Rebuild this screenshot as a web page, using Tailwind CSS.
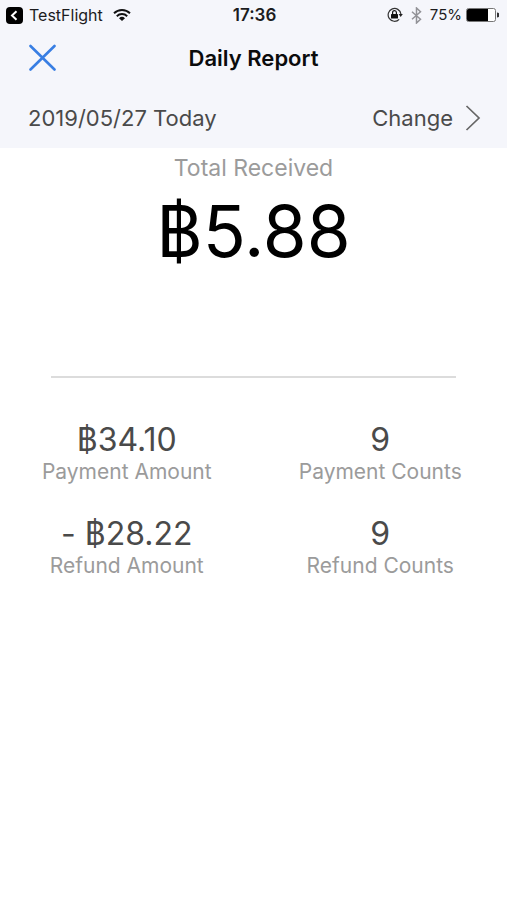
<!DOCTYPE html>
<html lang="en">
<head>
<meta charset="utf-8">
<meta name="viewport" content="width=device-width, initial-scale=1">
<title>Daily Report</title>
<script src="https://cdn.jsdelivr.net/npm/@tailwindcss/browser@4"></script>
</head>
<body class="min-h-screen bg-white font-['Inter','Liberation_Sans',sans-serif] text-[#4a4a4a]">
<header class="bg-[#f5f6fb]">
  <div class="grid h-[30px] grid-cols-[1fr_auto_1fr] items-center pl-1.5 pr-2 text-[16px] leading-5 text-[#1c1c1e]">
    <div class="flex items-center">
      <svg class="h-[17px] w-[17px]" viewBox="0 0 17 17" aria-hidden="true"><rect width="17" height="17" rx="4" fill="#000"/><path d="M10.5 4.2 6 8.5l4.5 4.3" fill="none" stroke="#fff" stroke-width="2"/></svg>
      <span class="ml-1.5">TestFlight</span>
      <svg class="ml-2.5 h-3 w-[18px]" viewBox="0 0 18 12" aria-hidden="true"><g fill="none" stroke="#111" stroke-width="1.9"><path d="M1 4.3a11.4 11.4 0 0 1 16 0"/><path d="M3.8 7.2a7.4 7.4 0 0 1 10.4 0"/></g><path d="M9 12 6 9.2a4.3 4.3 0 0 1 6 0z" fill="#111"/></svg>
    </div>
    <span class="pl-1 text-[17px] font-semibold">17:36</span>
    <div class="flex items-center justify-end">
      <svg class="h-4 w-4" viewBox="0 0 16 16" aria-hidden="true"><path d="M12.2 12.3A6.4 6.4 0 1 1 13.9 7" fill="none" stroke="#333" stroke-width="1.2"/><path d="M11.6 7h4.2l-2.1 3z" fill="#222"/><rect x="4" y="7" width="7" height="4.6" rx=".6" fill="#111"/><path d="M5.6 7.2V5.6a1.900 1.900 0 0 1 3.800 0v1.6" fill="none" stroke="#111" stroke-width="1.2"/></svg>
      <svg class="ml-2 h-[17px] w-[11px]" viewBox="0 0 11 17" aria-hidden="true"><path d="m1 4.8 8.5 7.4-4 3.8V1l4 3.8L1 12.2" fill="none" stroke="#929297" stroke-width="1.5"/></svg>
      <span class="ml-2 text-[15px]">75%</span>
      <svg class="ml-1 h-[14px] w-[33px]" viewBox="0 0 33 14" aria-hidden="true"><rect x=".5" y=".5" width="29" height="13" rx="2" fill="#fff" stroke="#777"/><path d="M2.5 1H22v12H2.5A1.5 1.5 0 0 1 1 11.500V2.500A1.500 1.500 0 0 1 2.500 1z" fill="#000"/><path d="M31 4.500a2.500 2.500 0 0 1 0 5z" fill="#333"/></svg>
    </div>
  </div>
  <div class="grid h-14 grid-cols-[1fr_auto_1fr] items-center px-7">
    <button type="button" aria-label="Close" class="h-7 w-7">
      <svg class="h-7 w-7" viewBox="0 0 28 28" aria-hidden="true"><path d="m2.500 2 24 23.500m0-23.500-24 23.500" fill="none" stroke="#387ee3" stroke-width="2.600" stroke-linecap="round"/></svg>
    </button>
    <h1 class="text-[22px] font-semibold leading-7 text-[#0b0b0c]">Daily Report</h1>
  </div>
  <div class="flex h-[62px] items-center justify-between pl-7 pr-[26px] pt-0.5 text-[22px] leading-7">
    <span>2019/05/27 Today</span>
    <button type="button" class="flex items-center">Change
      <svg class="ml-3 h-[26px] w-4" viewBox="0 0 16 26" aria-hidden="true"><path d="m1.500 1 12.500 12L1.500 25" fill="none" stroke="#666" stroke-width="1.700"/></svg>
    </button>
  </div>
</header>
<main>
  <section class="text-center">
    <h2 class="text-[23px] leading-10 text-[#9b9b9b]">Total Received</h2>
    <p class="text-[71px] leading-[86px] text-black">฿5.88</p>
  </section>
  <hr class="mx-[51px] mt-[102px] border-t-2 border-[#dcdcdc]">
  <dl class="mt-[42px] grid grid-cols-2 gap-y-[30px] text-center">
    <div class="flex flex-col-reverse"><dt class="text-[21px] leading-6 text-[#9b9b9b]">Payment Amount</dt><dd class="text-[32px] leading-10">฿34.10</dd></div>
    <div class="flex flex-col-reverse"><dt class="text-[21px] leading-6 text-[#9b9b9b]">Payment Counts</dt><dd class="text-[32px] leading-10">9</dd></div>
    <div class="flex flex-col-reverse"><dt class="text-[21px] leading-6 text-[#9b9b9b]">Refund Amount</dt><dd class="text-[32px] leading-10">- ฿28.22</dd></div>
    <div class="flex flex-col-reverse"><dt class="text-[21px] leading-6 text-[#9b9b9b]">Refund Counts</dt><dd class="text-[32px] leading-10">9</dd></div>
  </dl>
</main>
</body>
</html>
